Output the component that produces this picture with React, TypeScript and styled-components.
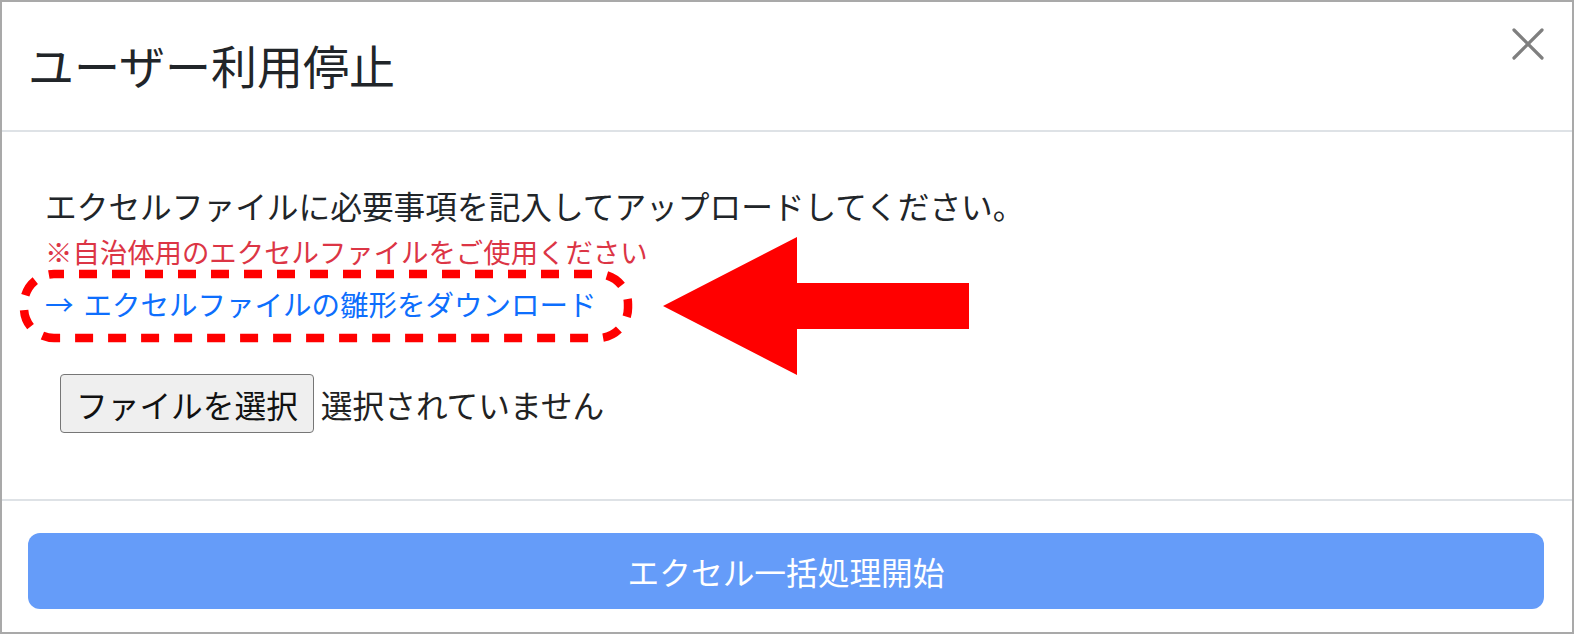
import * as React from 'react'
import styled, { createGlobalStyle } from 'styled-components'

const GlobalStyle = createGlobalStyle`
  html, body {
    margin: 0;
    padding: 0;
    background: #ffffff;
  }
  body {
    font-family: "Noto Sans CJK JP", "Noto Sans", sans-serif;
    color: #212529;
  }
`

const Frame = styled.div`
  width: 1574px;
  height: 634px;
  box-sizing: border-box;
  border: 2px solid #a9a9a9;
  display: flex;
  flex-direction: column;
  background: #ffffff;
`

const Header = styled.div`
  height: 128px;
  flex: none;
  border-bottom: 2px solid #dee2e6;
  padding: 0 28px 0 26px;
  display: flex;
  justify-content: space-between;
  align-items: flex-start;
`

const Title = styled.h5`
  margin: 0;
  font-size: 46px;
  font-weight: 400;
  line-height: 56px;
  padding-top: 34px;
`

const CloseButton = styled.button`
  margin-top: 26px;
  width: 32px;
  height: 32px;
  padding: 0;
  border: 0;
  background: transparent;
  display: flex;
  align-items: center;
  justify-content: center;
  cursor: pointer;
`

const Body = styled.div`
  flex: 1;
  position: relative;
  padding: 50px 43px 0;
  display: flex;
  flex-direction: column;
  align-items: flex-start;
`

const Lead = styled.p`
  margin: 0;
  font-size: 31.7px;
  line-height: 46px;
`

const Note = styled.p`
  margin: 3px 0 0;
  font-size: 27.4px;
  line-height: 40px;
  color: #dc3545;
`

const TemplateLink = styled.a`
  margin-top: 11px;
  font-size: 28.5px;
  line-height: 44px;
  color: #0d6efd;
  text-decoration: none;
  white-space: pre;
`

const LinkArrow = styled.span`
  padding-right: 10px;
`

const FileRow = styled.div`
  margin: 48px 0 0 15px;
  display: flex;
  align-items: center;
  gap: 7px;
`

const FileButton = styled.button`
  height: 59px;
  box-sizing: border-box;
  padding: 0 15px;
  font-family: inherit;
  font-size: 31.7px;
  color: #111;
  background: #efefef;
  border: 1.5px solid #767676;
  border-radius: 4px;
`

const FileState = styled.span`
  font-size: 31.7px;
  color: #222;
`

const Overlay = styled.svg`
  position: absolute;
  left: 0;
  top: 0;
  width: 100%;
  height: 100%;
  pointer-events: none;
  overflow: visible;
`

const Footer = styled.div`
  flex: none;
  border-top: 2px solid #dee2e6;
  padding: 32px 28px 23px 26px;
`

const SubmitButton = styled.button`
  width: 100%;
  height: 76px;
  border: 0;
  border-radius: 12px;
  background: #659cf9;
  color: #ffffff;
  font-family: inherit;
  font-size: 31.7px;
`

// the overlay is drawn in body coordinates; body starts at page (2, 132)
const BODY_X = 2
const BODY_Y = 132

function Annotation() {
  const ring = { x: 24 - BODY_X, y: 274 - BODY_Y, w: 604, h: 64 }
  const arrow = [
    [663, 306], [797, 237], [797, 283], [969, 283],
    [969, 329], [797, 329], [797, 375],
  ]
    .map(([x, y]) => `${x - BODY_X},${y - BODY_Y}`)
    .join(' ')

  return (
    <Overlay>
      <rect
        x={ring.x}
        y={ring.y}
        width={ring.w}
        height={ring.h}
        rx={30}
        fill='none'
        stroke='#ff0000'
        strokeWidth={8.5}
        strokeDasharray='18 15'
        strokeDashoffset={8}
      />
      <polygon points={arrow} fill='#ff0000' />
    </Overlay>
  )
}

export default function App() {
  return (
    <>
      <GlobalStyle />
      <Frame>
        <Header>
          <Title>ユーザー利用停止</Title>
          <CloseButton aria-label='閉じる'>
            <svg width='32' height='32' viewBox='0 0 32 32'>
              <path d='M2 2 L30 30 M30 2 L2 30' stroke='#7f7f7f' strokeWidth='3.2' strokeLinecap='round' />
            </svg>
          </CloseButton>
        </Header>

        <Body>
          <Lead>エクセルファイルに必要事項を記入してアップロードしてください。</Lead>
          <Note>※自治体用のエクセルファイルをご使用ください</Note>
          <TemplateLink href='#'>
            <LinkArrow>→</LinkArrow>エクセルファイルの雛形をダウンロード
          </TemplateLink>

          <FileRow>
            <FileButton>ファイルを選択</FileButton>
            <FileState>選択されていません</FileState>
          </FileRow>

          <Annotation />
        </Body>

        <Footer>
          <SubmitButton>エクセル一括処理開始</SubmitButton>
        </Footer>
      </Frame>
    </>
  )
}
